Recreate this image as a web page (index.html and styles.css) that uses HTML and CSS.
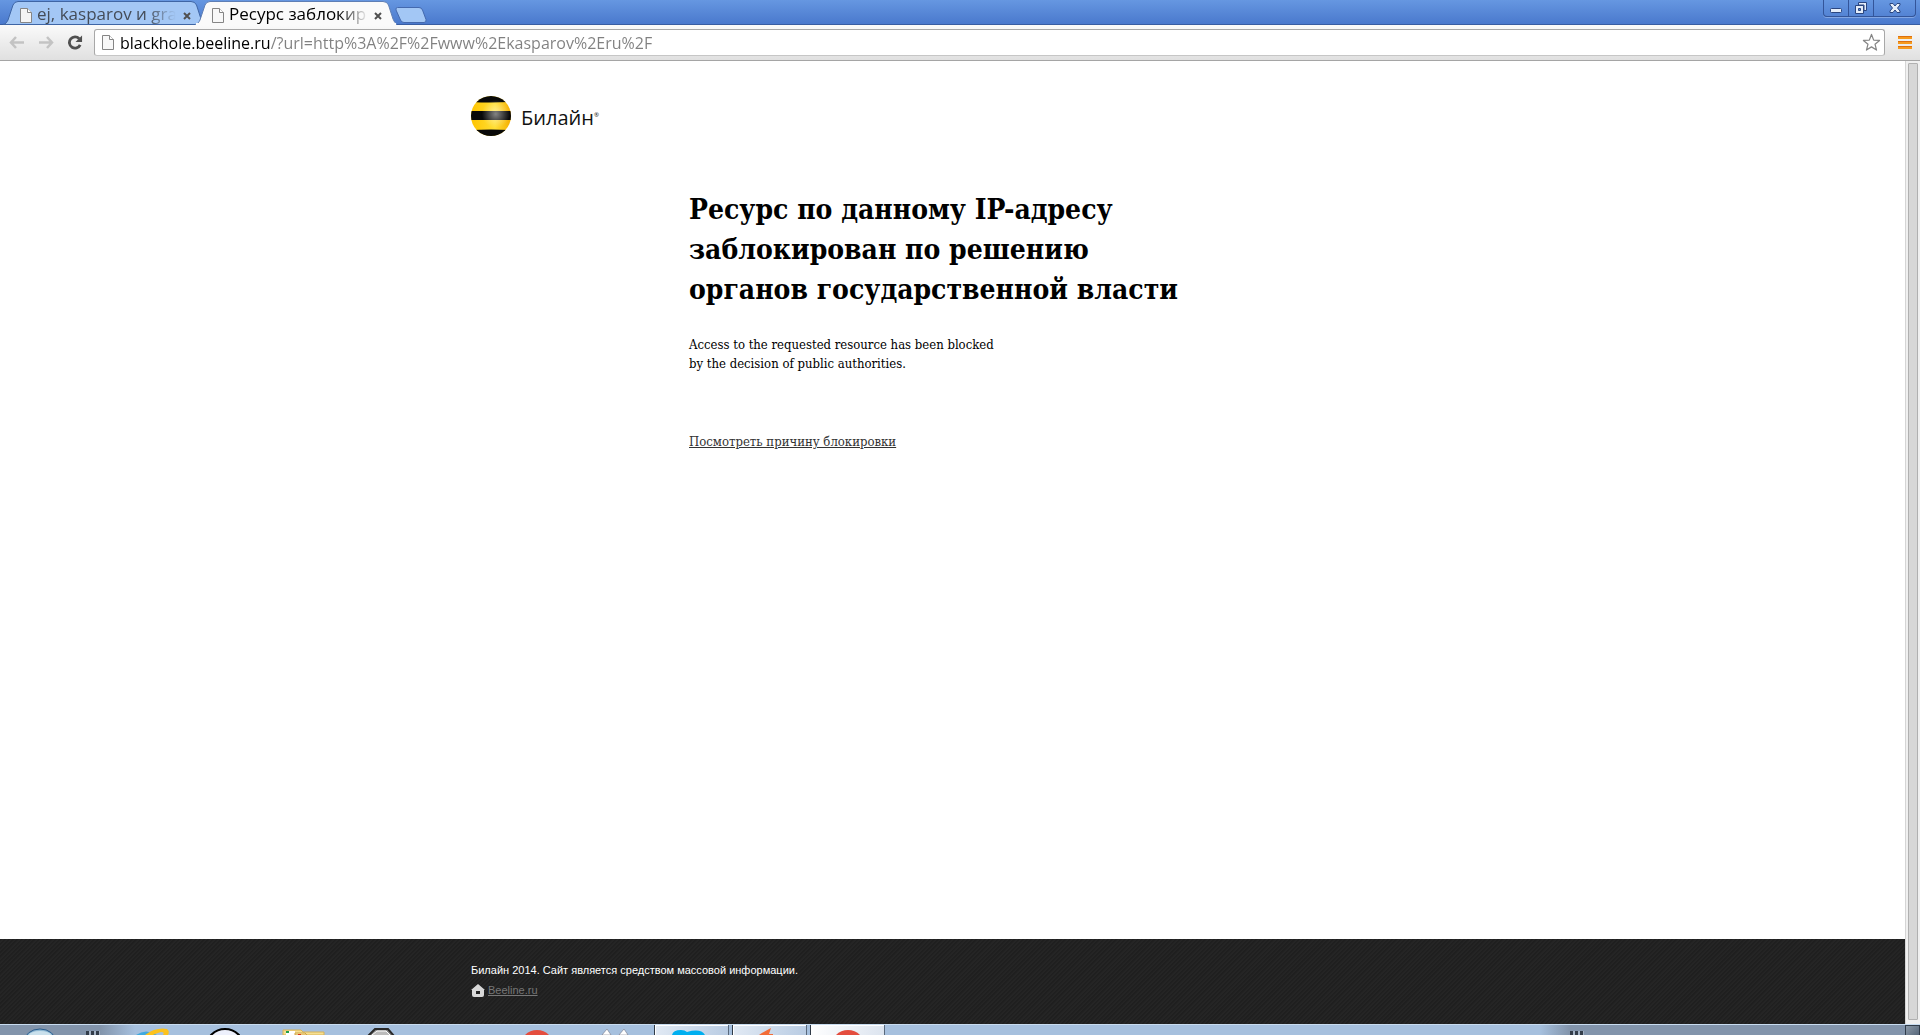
FILE: index.html
```html
<!DOCTYPE html>
<html lang="ru">
<head>
    <meta charset="UTF-8">
    <meta name="viewport" content="width=device-width, initial-scale=1.0">
    <title>Ресурс заблокирован</title>
    <link rel="stylesheet" href="styles.css">
</head>
<body>
    <header class="titlebar">
        <div class="tabs">
            <div class="tab">
                <svg class="tab-shape" viewBox="0 0 202 25" preserveAspectRatio="none">
                    <path d="M0 24.5C3 24 4 22 5 20L10 5Q11.500 1.500 15 1.500H188Q192 1.500 193.500 5L198 19Q199.500 23 202 24.500Z" fill="#a3c7f5" stroke="#3e65a5"/>
                </svg>
                <svg class="page-icon" viewBox="0 0 12 15"><path d="M.5.500H7.500L11.500 4.500V14.500H.5Z" fill="#f4f4f4" stroke="#858585"/><path d="M7.500.5V4.500H11.500" fill="#fff" stroke="#858585"/></svg>
                <span class="tab-title">ej, kasparov и gra</span>
                <button class="tab-close" aria-label="Закрыть вкладку"><svg viewBox="0 0 8 8"><path d="M1 1L7 7M7 1L1 7"/></svg></button>
            </div>
            <div class="tab active">
                <svg class="tab-shape" viewBox="0 0 202 25" preserveAspectRatio="none">
                    <path d="M0 24.5C3 24 4 22 5 20L10 5Q11.500 1.500 15 1.500H188Q192 1.500 193.500 5L198 19Q199.500 23 202 24.500Z" fill="#fafafa" stroke="#5f7fb5"/>
                    <path d="M1 24H201" stroke="#fafafa" stroke-width="2"/>
                </svg>
                <svg class="page-icon" viewBox="0 0 12 15"><path d="M.5.500H7.500L11.500 4.500V14.500H.5Z" fill="#f8f8f8" stroke="#858585"/><path d="M7.500.5V4.500H11.500" fill="#fff" stroke="#858585"/></svg>
                <span class="tab-title">Ресурс заблокир</span>
                <button class="tab-close" aria-label="Закрыть вкладку"><svg viewBox="0 0 8 8"><path d="M1 1L7 7M7 1L1 7"/></svg></button>
            </div>
            <button class="new-tab" aria-label="Новая вкладка">
                <svg viewBox="0 0 32 16"><path d="M2.500.500H24Q26.500.500 27.500 3L31 12.500Q31.500 15.500 29 15.500H9Q6.500 15.500 5.500 13L1 3Q.5.500 2.500.5Z" fill="#a3c7f5" stroke="#4469ae"/></svg>
            </button>
        </div>
        <div class="window-buttons">
            <button aria-label="Свернуть"><svg viewBox="0 0 14 14"><rect x="1.500" y="7.500" width="11" height="4" rx="1" fill="#e4edfa" stroke="#2b4680"/></svg></button>
            <button aria-label="Восстановить"><svg viewBox="0 0 14 14"><path d="M4.500 1.500H12.500V9.500H10V4H4.500Z" fill="#e4edfa" stroke="#2b4680"/><path d="M1.500 4.500H9.500V12.500H1.500ZM4.500 7.500V9.500H6.500V7.500Z" fill="#e4edfa" fill-rule="evenodd" stroke="#2b4680"/></svg></button>
            <button class="close" aria-label="Закрыть"><svg viewBox="0 0 14 14"><path d="M2 2.500H5L7 5L9 2.500H12V4L9.500 7L12 10V11.500H9L7 9L5 11.500H2V10L4.500 7L2 4Z" fill="#e4edfa" stroke="#2b4680"/></svg></button>
        </div>
    </header>

    <nav class="toolbar">
        <button class="nav-button" aria-label="Назад"><svg viewBox="0 0 16 14"><path d="M7 1.500L2 7L7 12.500M2 7H15" fill="none" stroke="#c3c3c3" stroke-width="2.500"/></svg></button>
        <button class="nav-button" aria-label="Вперёд"><svg viewBox="0 0 16 14"><path d="M9 1.500L14 7L9 12.500M14 7H1" fill="none" stroke="#c3c3c3" stroke-width="2.500"/></svg></button>
        <button class="nav-button" aria-label="Обновить"><svg viewBox="0 0 16 16"><path d="M12.500 4A6 6 0 1 0 13.500 10.500" fill="none" stroke="#505050" stroke-width="3"/><path d="M15.500.5V7.500H8.500Z" fill="#505050"/></svg></button>
        <div class="address-bar">
            <svg class="page-icon" viewBox="0 0 12 15"><path d="M.5.500H7.500L11.500 4.500V14.500H.5Z" fill="#f8f8f8" stroke="#858585"/><path d="M7.500.5V4.500H11.500" fill="#fff" stroke="#858585"/></svg>
            <input class="url" type="text" aria-label="Адрес" spellcheck="false" value="blackhole.beeline.ru/?url=http%3A%2F%2Fwww%2Ekasparov%2Eru%2F">
            <button class="star" aria-label="Закладка"><svg viewBox="0 0 20 20"><path d="M10 1.500L12.300 7.500L18.500 7.800L13.700 11.800L15.300 18L10 14.600L4.700 18L6.300 11.800L1.500 7.800L7.700 7.500Z" fill="#fff" stroke="#858585" stroke-width="1.300" stroke-linejoin="round"/></svg></button>
        </div>
        <button class="menu" aria-label="Меню"><svg viewBox="0 0 14 14"><path d="M0 1.500H14M0 6.500H14M0 11.500H14" stroke="#f79a1c" stroke-width="3"/><path d="M0 .5H14M0 5.500H14M0 10.500H14" stroke="#dd7010"/></svg></button>
    </nav>

    <div class="viewport">
        <div class="page">
            <main class="content">
                <a class="logo" href="#">
                    <svg viewBox="0 0 40 40">
                        <defs>
                            <clipPath id="ball"><circle cx="20" cy="20" r="20"/></clipPath>
                            <radialGradient id="shine" cx=".62" cy=".45" r=".35">
                                <stop offset="0" stop-color="#fff" stop-opacity=".5"/>
                                <stop offset="1" stop-color="#fff" stop-opacity="0"/>
                            </radialGradient>
                            <linearGradient id="yellow">
                                <stop offset="0" stop-color="#ffc400"/>
                                <stop offset=".6" stop-color="#ffdf35"/>
                                <stop offset="1" stop-color="#f5ad00"/>
                            </linearGradient>
                        </defs>
                        <g clip-path="url(#ball)">
                            <rect width="40" height="40" fill="url(#yellow)"/>
                            <path d="M0 0H40V6Q20 7 0 6ZM0 15H40V24H0ZM0 34Q20 33 40 34V40H0Z" fill="#090909"/>
                            <rect width="40" height="40" fill="url(#shine)"/>
                        </g>
                    </svg>
                    <span>Билайн<sup>®</sup></span>
                </a>
                <section class="message">
                    <h1>Ресурс по данному IP-адресу<br>заблокирован по решению<br>органов государственной власти</h1>
                    <p>Access to the requested resource has been blocked<br>by the decision of public authorities.</p>
                    <a class="reason" href="#">Посмотреть причину блокировки</a>
                </section>
            </main>
            <footer class="footer">
                <div class="footer-inner">
                    <p>Билайн 2014. Сайт является средством массовой информации.</p>
                    <div class="home">
                        <svg viewBox="0 0 14 13"><path d="M7 0L14 6H13V11Q13 13 11 13H3Q1 13 1 11V6H0ZM5 7V10H9V7Z" fill="#d8d8d8" fill-rule="evenodd"/></svg>
                        <a href="#">Beeline.ru</a>
                    </div>
                </div>
            </footer>
        </div>
        <div class="scrollbar"><div class="thumb"></div></div>
    </div>

    <div class="taskbar">
        <div class="start"><svg viewBox="0 0 80 10"><ellipse cx="40" cy="17" rx="16" ry="13" fill="#8fb9d4" stroke="#285a8c"/><ellipse cx="40" cy="10" rx="11" ry="4" fill="#c9e0ec"/></svg></div>
        <div class="grip"></div>
        <div class="task"><svg viewBox="0 0 78 10"><path d="M28 10Q38 3 49 10Z" fill="#3fa9df"/><path d="M37 10Q48 2 59 4Q62 6 60 10H55Q57 7 53 7Q49 8 45 10Z" fill="#fcc21d"/></svg></div>
        <div class="task"><svg viewBox="0 0 78 10"><circle cx="39" cy="23" r="19" fill="#edf0fc" stroke="#000" stroke-width="2"/></svg></div>
        <div class="task"><svg viewBox="0 0 78 10"><path d="M19 10V5H37L39 7H60V10Z" fill="#f5df91" stroke="#d8b256"/><path d="M22 6H31V10H22Z" fill="#fff"/><path d="M22 6H25V8H22Z" fill="#20a04a"/><path d="M31 10V8H41L43 10Z" fill="#ffe9a5" stroke="#cda344"/><path d="M34 9H37V10H34Z" fill="#d9351e"/></svg></div>
        <div class="task"><svg viewBox="0 0 78 10"><path d="M26 11L33 4H46L52 11Z" fill="#888" stroke="#292929" stroke-width="2"/><path d="M30 10L35 6H44L48 10" fill="#bbb" stroke="#fff"/></svg></div>
        <div class="task"></div>
        <div class="task"><svg viewBox="0 0 78 10"><circle cx="39" cy="22" r="17" fill="#e44d3e"/></svg></div>
        <div class="task"><svg viewBox="0 0 78 10"><path d="M26 10L31 4L35 10ZM43 10L48 4L52 10Z" fill="#fff" stroke="#667" stroke-width=".5"/></svg></div>
        <div class="task open"><svg viewBox="0 0 75 10"><path d="M17 10Q18 5 26 5Q30 5 32 7Q46 3 50 10Z" fill="#00aff0"/></svg></div>
        <div class="task open"><svg viewBox="0 0 75 10"><path d="M26 10Q32 6 38 3L36 9H40V10Z" fill="#f36c36"/></svg></div>
        <div class="task open current"><svg viewBox="0 0 75 10"><circle cx="37" cy="22" r="17" fill="#e44d3e"/></svg></div>
        <div class="tray"><div class="grip"></div></div>
        <button class="show-desktop" aria-label="Свернуть все окна"></button>
    </div>
</body>
</html>
```
FILE: styles.css
```css
* {
    margin: 0;
    padding: 0;
    box-sizing: border-box;
}

body {
    display: flex;
    flex-direction: column;
    height: 100vh;
    overflow: hidden;
    background: #fff;
    font-family: "Liberation Sans", Arial, sans-serif;
}

button {
    border: none;
    background: none;
    cursor: pointer;
}

svg {
    display: block;
    flex: none;
}

/* Window title and tabs */
.titlebar {
    display: flex;
    justify-content: space-between;
    align-items: flex-start;
    height: 25px;
    padding: 0 4px 0 3px;
    background: linear-gradient(#6697e1, #4a79cd);
    border-bottom: 1px solid #385da2;
}

.tabs {
    display: flex;
}

.tab {
    position: relative;
    display: flex;
    align-items: center;
    width: 202px;
    height: 25px;
    margin-right: -10px;
    padding: 2px 9px 0 17px;
    color: #444c58;
    font: 17px/24px "Open Sans", "Noto Sans", sans-serif;
}

.tab.active {
    z-index: 1;
    color: #000;
}

.tab-shape {
    position: absolute;
    left: 0;
    top: 0;
    width: 202px;
    height: 25px;
}

.page-icon {
    position: relative;
    width: 12px;
    height: 15px;
    margin-top: 3px;
}

.tab-title {
    position: relative;
    width: 139px;
    margin-left: 5px;
    white-space: nowrap;
    -webkit-mask-image: linear-gradient(90deg, #000 110px, transparent 139px);
    mask-image: linear-gradient(90deg, #000 110px, transparent 139px);
}

.tab-close {
    position: relative;
    padding: 4px 6px 0 7px;
}

.tab-close svg {
    width: 8px;
    height: 8px;
    stroke: #505050;
    stroke-width: 2;
}

.new-tab {
    margin: 5px 0 0 8px;
}

.new-tab svg {
    width: 32px;
    height: 16px;
}

.window-buttons {
    display: flex;
    height: 17px;
    border: 1px solid #33559a;
    border-top: none;
    border-radius: 0 0 4px 4px;
    box-shadow: 0 1px 0 #82a6e3;
}

.window-buttons button {
    display: flex;
    justify-content: center;
    width: 25px;
    padding-top: 1px;
    border-right: 1px solid #33559a;
}

.window-buttons .close {
    width: 41px;
    border-right: none;
}

.window-buttons svg {
    width: 14px;
    height: 14px;
}

/* Toolbar */
.toolbar {
    display: flex;
    align-items: center;
    height: 36px;
    padding: 0 8px 0 9px;
    background: linear-gradient(#fafafa, #e0e0e0);
    border-bottom: 1px solid #a5a5a5;
}

.nav-button {
    width: 16px;
    margin-right: 13px;
}

.nav-button:nth-child(3) {
    margin-right: 11px;
}

.nav-button svg {
    width: 16px;
    height: 15px;
}

.address-bar {
    display: flex;
    flex: 1;
    align-items: center;
    height: 27px;
    margin-right: 13px;
    padding: 0 3px 0 7px;
    background: #fff;
    border: 1px solid #a8a8a8;
    border-bottom-color: #c6c6c6;
    border-radius: 3px;
}

.address-bar .page-icon {
    margin-top: 0;
}

/* Host name is black, the rest of the address is grey */
.url {
    flex: 1;
    height: 24px;
    margin-left: 6px;
    border: none;
    outline: none;
    color: transparent;
    background: linear-gradient(90deg, #000 151px, #808080 151px);
    -webkit-background-clip: text;
    background-clip: text;
    font: 16px/22px "Open Sans", "Noto Sans", sans-serif;
}

.star svg {
    width: 19px;
    height: 19px;
}

.menu svg {
    width: 14px;
    height: 14px;
}

/* Page */
.viewport {
    display: flex;
    flex: 1;
    min-height: 0;
}

.page {
    display: flex;
    flex: 1;
    flex-direction: column;
}

.content,
.footer-inner {
    width: 100%;
    max-width: 963px;
    margin: 0 auto;
}

.content {
    flex: 1;
    padding-top: 35px;
}

.logo {
    display: flex;
    align-items: center;
    width: 140px;
    color: #111;
    text-decoration: none;
    font: 500 20px/36px "Open Sans", sans-serif;
}

.logo svg {
    width: 40px;
    height: 40px;
    margin-right: 10px;
}

.logo sup {
    font-size: 6px;
}

.message {
    margin: 54px 0 0 218px;
    font-family: "DejaVu Serif Condensed", "DejaVu Serif", serif;
}

h1 {
    font-size: 28px;
    line-height: 40px;
}

.message p {
    margin-top: 25px;
    font-size: 13px;
    line-height: 19px;
}

.reason {
    display: inline-block;
    margin-top: 59px;
    color: #333;
    font-size: 13px;
    line-height: 19px;
}

.footer {
    height: 85px;
    padding-top: 23px;
    background: repeating-linear-gradient(135deg, #1f1f1f 0 1px, #252525 2px 3px);
    color: #fff;
    font-size: 11px;
    line-height: 16px;
}

.home {
    display: flex;
    align-items: center;
    gap: 3px;
    margin-top: 4px;
}

.home svg {
    width: 14px;
    height: 13px;
}

.home a {
    color: #777;
}

.scrollbar {
    width: 15px;
    padding: 2px;
    background: #f0f0f0;
    border-left: 1px solid #d5d5d5;
}

.thumb {
    height: calc(100% - 2px);
    background: #d7d7d7;
    border: 1px solid #b0b0b0;
    border-radius: 1px;
}

/* Taskbar */
.taskbar {
    display: flex;
    height: 11px;
    overflow: hidden;
    background: linear-gradient(90deg, #8294ab 100px, #a6c0de 135px);
    border-top: 1px solid #c8dcf0;
}

.start {
    width: 80px;
}

.grip {
    width: 14px;
    height: 4px;
    margin: 6px 8px 0 6px;
    background: repeating-linear-gradient(90deg, #333d4a 0 3px, #a3b2c4 3px 5px);
}

.task {
    width: 78px;
}

.task svg,
.start svg {
    height: 10px;
}

.task.open {
    width: 75px;
    margin-right: 3px;
    background: linear-gradient(100deg, #e2eaf4, #b9cce3);
    border-left: 1px solid #303b48;
    border-right: 1px solid #59697c;
    box-shadow: inset 1px 1px 0 #fff;
}

.task.current {
    background: linear-gradient(100deg, #fff, #dce4ef);
}

.tray {
    flex: 1;
    display: flex;
    justify-content: flex-end;
    padding-right: 313px;
    background: linear-gradient(270deg, #8294ab 335px, transparent 365px);
}

.show-desktop {
    width: 15px;
    background: linear-gradient(135deg, #8b99a8, #57677a);
    border: 1px solid #303c4a;
    border-bottom: none;
}
```
